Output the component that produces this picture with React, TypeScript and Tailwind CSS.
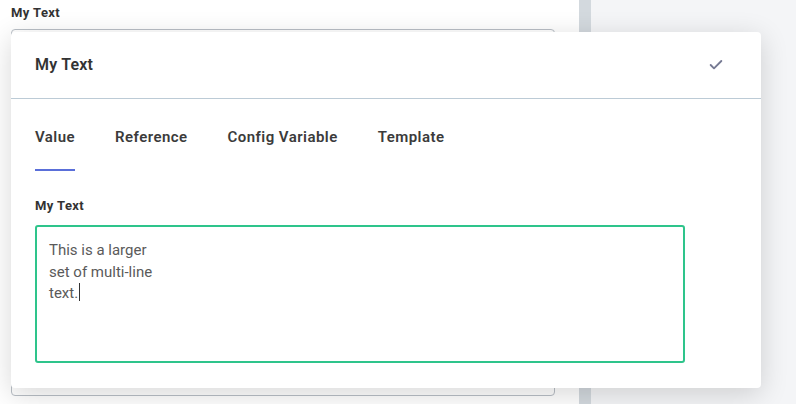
import { Check } from "lucide-react";

const TABS = ["Value", "Reference", "Config Variable", "Template"];

export default function App() {
  return (
    <div
      className="relative flex h-[404px] w-[796px] overflow-hidden bg-[#f4f5f7]"
      style={{ fontFamily: "Roboto, 'Noto Sans', sans-serif" }}
    >
      {/* underlying editor panel */}
      <div className="flex w-[579px] flex-col bg-white px-[11px] pt-[5px]">
        <div className="text-[13px] font-bold leading-[16px] tracking-[0.4px] text-[#333]">My Text</div>
        <div className="mt-[8px] h-[367px] w-[544px] rounded-[4px] border border-[#b9bfc6]" />
      </div>
      <div className="w-[12px] bg-[#d3d9de]" />
      <div className="flex-1" />

      {/* popover */}
      <div className="absolute left-[11px] top-[32px] flex h-[356px] w-[750px] flex-col rounded-[4px] bg-white shadow-[0_6px_28px_rgba(0,0,0,0.16)]">
        <div className="flex h-[67px] items-center justify-between border-b border-[#bccbd6] pl-[24px] pr-[37px]">
          <span className="text-[16px] font-semibold tracking-[0.2px] text-[#333]">My Text</span>
          <Check size={16} strokeWidth={2.8} className="text-[#767a93]" />
        </div>

        <div className="flex gap-[40px] px-[24px] pt-[28px]">
          {TABS.map((tab, i) => (
            <div key={tab} className="flex flex-col">
              <span className="text-[15px] font-semibold leading-[20px] tracking-[0.45px] text-[#3b3b3b]">
                {tab}
              </span>
              <span
                className={`mt-[22px] h-[2px] ${i === 0 ? "bg-[#5a6fd9]" : "bg-transparent"}`}
              />
            </div>
          ))}
        </div>

        <div className="px-[24px] pt-[27px]">
          <div className="text-[13px] font-bold leading-[16px] tracking-[0.4px] text-[#333]">My Text</div>
          <div className="mt-[11px] h-[138px] w-[650px] rounded-[3px] border-2 border-[#2ec48b] px-[12px] pt-[13px] text-[15px] leading-[21.5px] text-[#5a5a5a]">
            This is a larger
            <br />
            set of multi-line
            <br />
            text.<span className="ml-[1px] inline-block h-[18px] w-[1px] bg-[#333] align-[-3px]" />
          </div>
        </div>
      </div>
    </div>
  );
}
